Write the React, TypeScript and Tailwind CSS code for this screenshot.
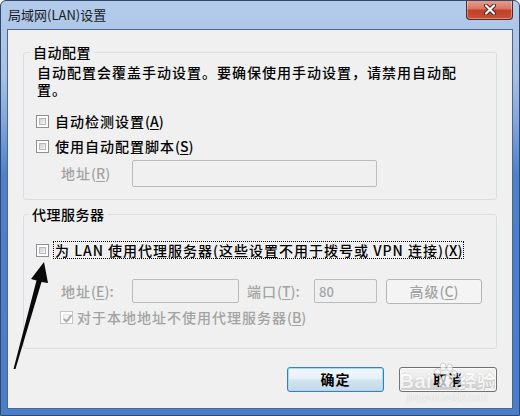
import React from "react";

const cjk = "font-['Noto_Sans_CJK_SC','Noto_Sans',sans-serif]";

function CheckBox({ checked, disabled }: { checked?: boolean; disabled?: boolean }) {
  return (
    <span
      className={`flex h-[13px] w-[13px] shrink-0 items-center justify-center border bg-white p-[2px] ${
        disabled ? "border-[#c5c5c5]" : "border-[#8f8f8f]"
      }`}
    >
      <span
        className={`relative block h-full w-full border ${
          disabled
            ? "border-[#e3e3e3] bg-[#f4f4f4]"
            : "border-[#b4b8bd] bg-gradient-to-br from-[#cfd1d3] to-[#f7f7f7]"
        }`}
      >
        {checked && (
          <svg viewBox="0 0 9 9" className="absolute -left-[2px] -top-[2px] h-[11px] w-[11px]">
            <path d="M1.5 4.8 L3.7 7 L7.8 1.8" fill="none" stroke="#a9a9a9" strokeWidth={1.6} />
          </svg>
        )}
      </span>
    </span>
  );
}

function Key({ k }: { k: string }) {
  return (
    <span className="tracking-normal">
      (<span className="underline underline-offset-2">{k}</span>)
    </span>
  );
}

export default function App() {
  return (
    <div
      className={`relative flex h-[416px] w-[520px] flex-col overflow-hidden rounded-t-[6px] border border-[#34466a] bg-[linear-gradient(180deg,#b3cbeb_0%,#a7c1e6_18%,#7ea4da_30%,#4d80cb_42%,#4a7dca_100%)] ${cjk}`}
    >
      {/* title bar */}
      <div className="flex h-[28px] shrink-0 items-start justify-between">
        <div className="pl-[7px] pt-[5px] text-[13px] leading-[17px] text-[#1a1a1a]">局域网(LAN)设置</div>
        <div className="mr-[6px] -mt-px flex h-[20px] w-[47px] items-center justify-center rounded-b-[4px] border border-t-0 border-[#5b2620] bg-[linear-gradient(180deg,#e9a393_0%,#d8765f_45%,#c2402a_55%,#c5532f_100%)] shadow-[inset_0_0_0_1px_rgba(255,255,255,0.35)]">
          <svg viewBox="0 0 14 11" className="h-[11px] w-[14px]">
            <path d="M3 1.5 L11 9.5 M11 1.5 L3 9.5" stroke="#4a2320" strokeWidth={4} strokeLinecap="round" />
            <path d="M3 1.5 L11 9.5 M11 1.5 L3 9.5" stroke="#ffffff" strokeWidth={2.2} strokeLinecap="round" />
          </svg>
        </div>
      </div>

      {/* client area */}
      <div className="mx-[6px] mb-[6px] flex flex-1 flex-col border border-[#4f6587] bg-[#f0f0f0] px-[15px] pt-[14px] text-[14px] leading-[17px] text-black">
        <fieldset className="rounded-[3px] border border-[#d5dfe5] pb-[12px] pl-[12px] pr-[10px]">
          <legend className="-ml-[6px] px-[3px] font-medium tracking-[0.5px]">自动配置</legend>
          <p className="mt-[3px] w-[430px] pl-[1px] font-medium tracking-[1px]">
            自动配置会覆盖手动设置。要确保使用手动设置，请禁用自动配置。
          </p>
          <div className="mt-[13px] flex h-[20px] items-center gap-[6px]">
            <CheckBox />
            <span className="font-medium tracking-[1px]">
              自动检测设置<Key k="A" />
            </span>
          </div>
          <div className="mt-[5px] flex h-[20px] items-center gap-[6px]">
            <CheckBox />
            <span className="font-medium tracking-[1px]">
              使用自动配置脚本<Key k="S" />
            </span>
          </div>
          <div className="mt-[4px] flex items-center">
            <span className="w-[96px] pl-[25px] font-medium tracking-[1px] text-[#a3a3a3]">
              地址<Key k="R" />
            </span>
            <span className="h-[27px] w-[245px] rounded-[2px] border border-[#b9bcbf] bg-[#f0f0f0]" />
          </div>
        </fieldset>

        <fieldset className="mt-[6px] rounded-[3px] border border-[#d5dfe5] pb-[21px] pl-[12px] pr-[10px]">
          <legend className="-ml-[7px] px-[3px] font-medium tracking-[0.5px]">代理服务器</legend>
          <div className="mt-[18px] flex h-[18px] items-center">
            <CheckBox />
            <span className="ml-[4px] border border-dotted border-black px-[1px] leading-[16px] font-medium tracking-[1px]">
              为 LAN 使用代理服务器(这些设置不用于拨号或 VPN 连接)<Key k="X" />
            </span>
          </div>
          <div className="mt-[19px] flex h-[26px] items-center">
            <span className="w-[96px] pl-[25px] font-medium tracking-[1px] text-[#a3a3a3]">
              地址<Key k="E" />:
            </span>
            <span className="h-[24px] w-[107px] rounded-[2px] border border-[#b9bcbf] bg-[#f0f0f0]" />
            <span className="ml-[8px] w-[67px] font-medium tracking-[1px] text-[#a3a3a3]">
              端口<Key k="T" />:
            </span>
            <span className="flex h-[24px] w-[63px] items-center rounded-[2px] border border-[#b9bcbf] bg-[#f0f0f0] pl-[4px] text-[13px] font-medium text-[#a3a3a3]">
              80
            </span>
            <span className="ml-[9px] flex h-[25px] w-[96px] items-center justify-center rounded-[3px] border border-[#b3b6b9] bg-[#f4f4f4] font-medium tracking-[1px] text-[#a3a3a3]">
              高级<Key k="C" />
            </span>
          </div>
          <div className="mt-[4px] flex h-[19px] items-center gap-[4px] pl-[24px]">
            <CheckBox checked disabled />
            <span className="font-medium tracking-[1px] text-[#a3a3a3]">
              对于本地地址不使用代理服务器<Key k="B" />
            </span>
          </div>
        </fieldset>

        <div className="mt-[18px] flex justify-end gap-[15px]">
          <button className="flex h-[25px] w-[97px] items-center justify-center rounded-[3px] border border-[#3c7fb1] bg-[linear-gradient(180deg,#f2f8fc_0%,#e6f0f7_48%,#d2e3ef_52%,#c3d9ea_100%)] font-semibold tracking-[1px] shadow-[inset_0_0_0_1px_#9fdcf8]">
            确定
          </button>
          <button className="flex h-[25px] w-[98px] items-center justify-center rounded-[3px] border border-[#707070] bg-[linear-gradient(180deg,#f2f2f2_0%,#ebebeb_48%,#dddddd_52%,#cfcfcf_100%)] font-semibold tracking-[1px] shadow-[inset_0_0_0_1px_#fcfcfc]">
            取消
          </button>
        </div>
      </div>

      {/* annotation arrow */}
      <svg className="pointer-events-none absolute left-0 top-0 h-[416px] w-[520px]" viewBox="0 0 520 416">
        <polygon points="43,261 30,278 35.5,279.5 12.5,368 14.5,368 40.5,281 47,282" fill="#0a0a0a" />
      </svg>

      {/* watermark */}
      <div className="pointer-events-none absolute left-[398px] top-[360px] flex flex-col items-center opacity-70">
        <div className="flex items-end font-['Liberation_Sans',sans-serif] text-[21px] font-bold leading-[22px] text-white [text-shadow:0_0_1px_#9a9a9a]">
          <span>Bai</span>
          <svg viewBox="0 0 28 30" className="mb-[1px] h-[30px] w-[26px]">
            <g fill="#ffffff" stroke="#a8a8a8" strokeWidth={0.8}>
              <ellipse cx="6" cy="11" rx="3.2" ry="4" />
              <ellipse cx="12" cy="5" rx="3.2" ry="4" />
              <ellipse cx="19" cy="6" rx="3.2" ry="4" />
              <ellipse cx="24" cy="13" rx="3" ry="3.8" />
              <path d="M7 24 C8 17 12 14 15 14 C19 14 22 18 23 24 C24 29 6 29 7 24 Z" />
            </g>
          </svg>
          <span className={`${cjk} text-[19px]`}>经验</span>
        </div>
        <div className="font-['Liberation_Sans',sans-serif] text-[10px] leading-[11px] text-white [text-shadow:0_0_1px_#a0a0a0]">
          jingyan.baidu.com
        </div>
      </div>
    </div>
  );
}
